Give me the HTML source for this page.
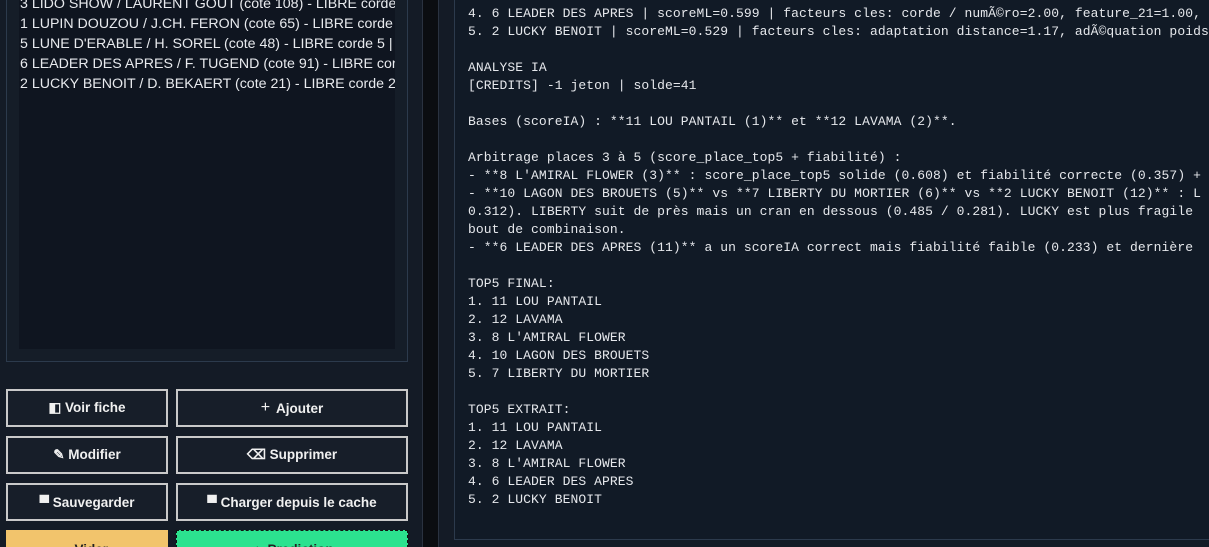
<!DOCTYPE html>
<html style="width:1209px;height:547px;overflow:hidden"><head><meta charset="utf-8"><style>
*{margin:0;padding:0;box-sizing:border-box}
body{width:1209px;height:547px;overflow:hidden;background:#141b26;position:relative;font-family:"Liberation Sans",sans-serif}
.left{position:absolute;left:0;top:0;width:422px;height:547px;background:#141b26;overflow:hidden}
.panel{position:absolute;left:6px;top:-10px;width:402px;height:372px;border:1px solid #2c3a4c;background:#151d28}
.list{position:absolute;left:19px;top:0;width:376px;height:349px;background:#0f1520;overflow:hidden}
.list div{position:absolute;left:1px;white-space:nowrap;color:#e8eaee;font-size:14.2px;line-height:20px}
.btn{position:absolute;height:38px;border:2px solid #c9c9c9;background:#171e29;color:#f0f0f0;font-weight:bold;font-size:13.5px;display:flex;align-items:center;justify-content:center;gap:6px}
.strip{position:absolute;left:422px;top:0;width:17px;height:547px;background:#0b0d11;border-left:1px solid #2a3240;border-right:1px solid #2a3240}
.right{position:absolute;left:439px;top:0;width:770px;height:547px;background:#141b26}
.txt{position:absolute;left:454px;top:-10px;width:800px;height:550px;border:1px solid #2c3a4c;background:#111a26}
.wrap{position:absolute;left:0;top:0;width:1209px;height:547px;overflow:hidden}
pre{position:absolute;left:468px;top:5px;font-family:"Liberation Mono",monospace;font-size:13px;letter-spacing:0.08px;line-height:18px;color:#e6e8ec;white-space:pre}
</style></head><body><div class="wrap">
<div class="left">
 <div class="panel"></div>
 <div class="list">
  <div style="top:-6px">3 LIDO SHOW / LAURENT GOUT (cote 108) - LIBRE corde</div>
  <div style="top:14px">1 LUPIN DOUZOU / J.CH. FERON (cote 65) - LIBRE corde</div>
  <div style="top:34px">5 LUNE D'ERABLE / H. SOREL (cote 48) - LIBRE corde 5 | r</div>
  <div style="top:54px">6 LEADER DES APRES / F. TUGEND (cote 91) - LIBRE corde</div>
  <div style="top:74px">2 LUCKY BENOIT / D. BEKAERT (cote 21) - LIBRE corde 2</div>
 </div>
 <div class="btn" style="left:6px;top:389px;width:162px">◧ Voir fiche</div>
 <div class="btn" style="left:176px;top:389px;width:232px"><span style="font-weight:normal;font-size:16px">+</span> Ajouter</div>
 <div class="btn" style="left:6px;top:436px;width:162px">✎ Modifier</div>
 <div class="btn" style="left:176px;top:436px;width:232px">⌫ Supprimer</div>
 <div class="btn" style="left:6px;top:483px;width:162px">▀ Sauvegarder</div>
 <div class="btn" style="left:176px;top:483px;width:232px">▀ Charger depuis le cache</div>
 <div class="btn" style="left:6px;top:530px;width:162px;background:#f2c46c;border:none;color:#222">▪ Vider</div>
 <div class="btn" style="left:176px;top:530px;width:232px;background:#2ce28f;border:1px dashed #111;color:#222">▲ Prediction</div>
</div>
<div class="strip"></div>
<div class="right"></div>
<div class="txt"></div>
<pre>4. 6 LEADER DES APRES | scoreML=0.599 | facteurs cles: corde / numÃ©ro=2.00, feature_21=1.00,
5. 2 LUCKY BENOIT | scoreML=0.529 | facteurs cles: adaptation distance=1.17, adÃ©quation poids

ANALYSE IA
[CREDITS] -1 jeton | solde=41

Bases (scoreIA) : **11 LOU PANTAIL (1)** et **12 LAVAMA (2)**.

Arbitrage places 3 à 5 (score_place_top5 + fiabilité) :
- **8 L'AMIRAL FLOWER (3)** : score_place_top5 solide (0.608) et fiabilité correcte (0.357) +
- **10 LAGON DES BROUETS (5)** vs **7 LIBERTY DU MORTIER (6)** vs **2 LUCKY BENOIT (12)** : L
0.312). LIBERTY suit de près mais un cran en dessous (0.485 / 0.281). LUCKY est plus fragile
bout de combinaison.
- **6 LEADER DES APRES (11)** a un scoreIA correct mais fiabilité faible (0.233) et dernière

TOP5 FINAL:
1. 11 LOU PANTAIL
2. 12 LAVAMA
3. 8 L'AMIRAL FLOWER
4. 10 LAGON DES BROUETS
5. 7 LIBERTY DU MORTIER

TOP5 EXTRAIT:
1. 11 LOU PANTAIL
2. 12 LAVAMA
3. 8 L'AMIRAL FLOWER
4. 6 LEADER DES APRES
5. 2 LUCKY BENOIT</pre>
</div></body></html>
